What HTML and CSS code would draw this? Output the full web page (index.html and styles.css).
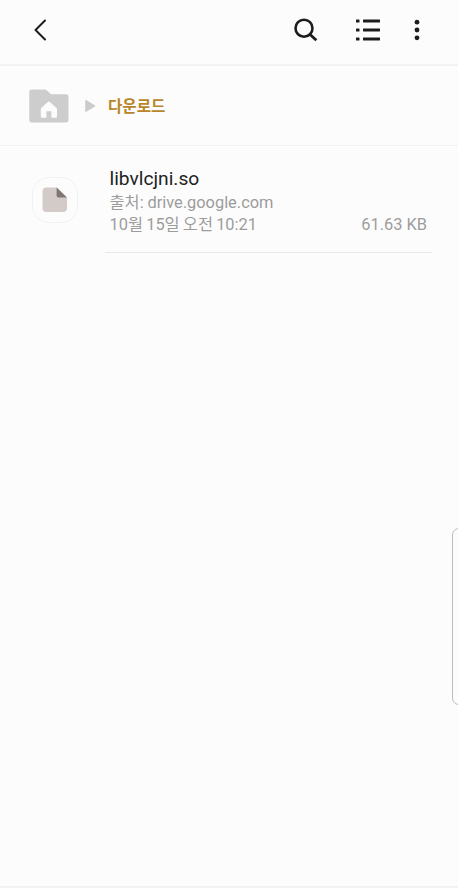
FILE: index.html
```html
<!DOCTYPE html>
<html lang="ko">
<head>
<meta charset="utf-8">
<title>다운로드</title>
<meta name="viewport" content="width=device-width, initial-scale=1">
<link rel="stylesheet" href="styles.css">
</head>
<body>
	<header class="toolbar">
		<svg class="back" width="14" height="22" viewBox="0 0 14 22">
			<path d="M12 1.5L2.5 11L12 20.5" fill="none" stroke="#1c1c1e" stroke-width="2" stroke-linecap="round" stroke-linejoin="round"/>
		</svg>
		<svg class="search" width="24" height="24" viewBox="0 0 24 24" fill="none" stroke="#1c1c1e">
			<circle cx="10" cy="10.2" r="8.5" stroke-width="2.6"/>
			<path d="M15.8 16.2L22.3 22.3" stroke-width="2.8"/>
		</svg>
		<svg class="list" width="24" height="22" viewBox="0 0 24 22" fill="#1c1c1e">
			<rect x="0" y="0.5" width="3.5" height="3" rx=".6"/><rect x="7" y="0.5" width="17" height="3" rx=".4"/>
			<rect x="0" y="9.5" width="3.5" height="3" rx=".6"/><rect x="7" y="9.5" width="17" height="3" rx=".4"/>
			<rect x="0" y="18.5" width="3.5" height="3" rx=".6"/><rect x="7" y="18.5" width="17" height="3" rx=".4"/>
		</svg>
		<svg class="more" width="6" height="22" viewBox="0 0 6 22" fill="#1c1c1e">
			<circle cx="3" cy="3.2" r="2.4"/>
			<circle cx="3" cy="11" r="2.4"/>
			<circle cx="3" cy="18.8" r="2.4"/>
		</svg>
	</header>

	<nav class="path">
		<svg class="home" width="40" height="34" viewBox="0 0 40 34">
			<path d="M3 .5H15.5Q17 .5 18 1.5L22 5.2H37Q39.5 5.2 39.5 8V31Q39.5 33.5 37 33.5H3Q.3 33.5 .3 31V3Q.3 .5 3 .5Z" fill="#cdcdcd"/>
			<path d="M18.8 12.9Q19.8 12 20.8 12.9L27.3 18.8Q28 19.5 28 20.3V27.5Q28 28.8 26.8 28.8H22.4V22.3H17.4V28.8H13Q11.8 28.8 11.8 27.5V20.3Q11.8 19.5 12.5 18.8Z" fill="#fcfcfc"/>
		</svg>
		<svg class="arrow" width="11" height="14" viewBox="0 0 11 14">
			<path d="M.8 1.2L10 7L.8 12.6Z" fill="#cbcbcb" stroke="#cbcbcb" stroke-linejoin="round"/>
		</svg>
		<span class="current">다운로드</span>
	</nav>

	<main class="file">
		<div class="thumb">
			<svg width="26" height="26" viewBox="0 0 26 26">
				<path d="M4.5 .5H15L25 10.5V21Q25 25 21 25H4.5Q.5 25 .5 21V4.5Q.5 .5 4.5 .5Z" fill="#d3cbc8"/>
				<path d="M14.6 .5L25 10.5H16.5Q14.6 10.5 14.6 8.6Z" fill="#81756f"/>
			</svg>
		</div>
		<div class="info">
			<div class="name">libvlcjni.so</div>
			<div class="source">출처: drive.google.com</div>
			<div class="meta"><span class="date">10월 15일 오전 10:21</span><span class="size">61.63 KB</span></div>
		</div>
	</main>

	<!-- edge panel handle -->
	<div class="edge"></div>
</body>
</html>
```
FILE: styles.css
```css
* { box-sizing: border-box; }

body {
    margin: 0;
    height: 888px;
    overflow: hidden;
    position: relative;
    background: #fcfcfc;
    border-bottom: 2px solid #f2f2f2;
    font-family: Roboto, "Noto Sans CJK KR", sans-serif;
}

svg { display: block; flex: none; }

.toolbar {
    display: flex;
    align-items: center;
    height: 66px;
    padding: 0 38px 4px 33px;
    border-bottom: 2px solid #f2f2f2;
}
.search { margin-left: auto; }
.list { margin-left: 38px; }
.more { margin-left: 34px; }

.path {
    display: flex;
    align-items: center;
    height: 80px;
    padding-left: 29px;
    border-bottom: 1px solid #f0f0f0;
}
.arrow { margin-left: 16px; }
.current {
    margin-left: 12px;
    padding-top: 2px;
    font-size: 15.6px;
    font-weight: 700;
    line-height: 20px;
    color: #b8862a;
}

.file {
    display: flex;
    padding: 21px 26px 0 32px;
}
.thumb {
    display: flex;
    align-items: center;
    justify-content: center;
    width: 46px;
    height: 46px;
    margin-top: 10px;
    border: 1px solid #f1f1f1;
    border-radius: 17px;
}
.info {
    flex: 1;
    height: 86px;
    margin-left: 27px;
    padding: 0 5px 0 4.5px;
    border-bottom: 1px solid #e8e8e8;
    white-space: nowrap;
}
.name { font-size: 19.2px; line-height: 24px; color: #222; }
.source, .meta { font-size: 16.4px; line-height: 22px; color: #9c9c9c; }
.source { margin-top: 1px; word-spacing: -.3px; }
.meta { display: flex; justify-content: space-between; }
.date { word-spacing: -.9px; }

.edge {
    position: absolute;
    top: 528px;
    right: -8px;
    width: 14px;
    height: 177px;
    border: 1px solid #bbb;
    border-radius: 7px;
    background: #fcfcfc;
}
```
